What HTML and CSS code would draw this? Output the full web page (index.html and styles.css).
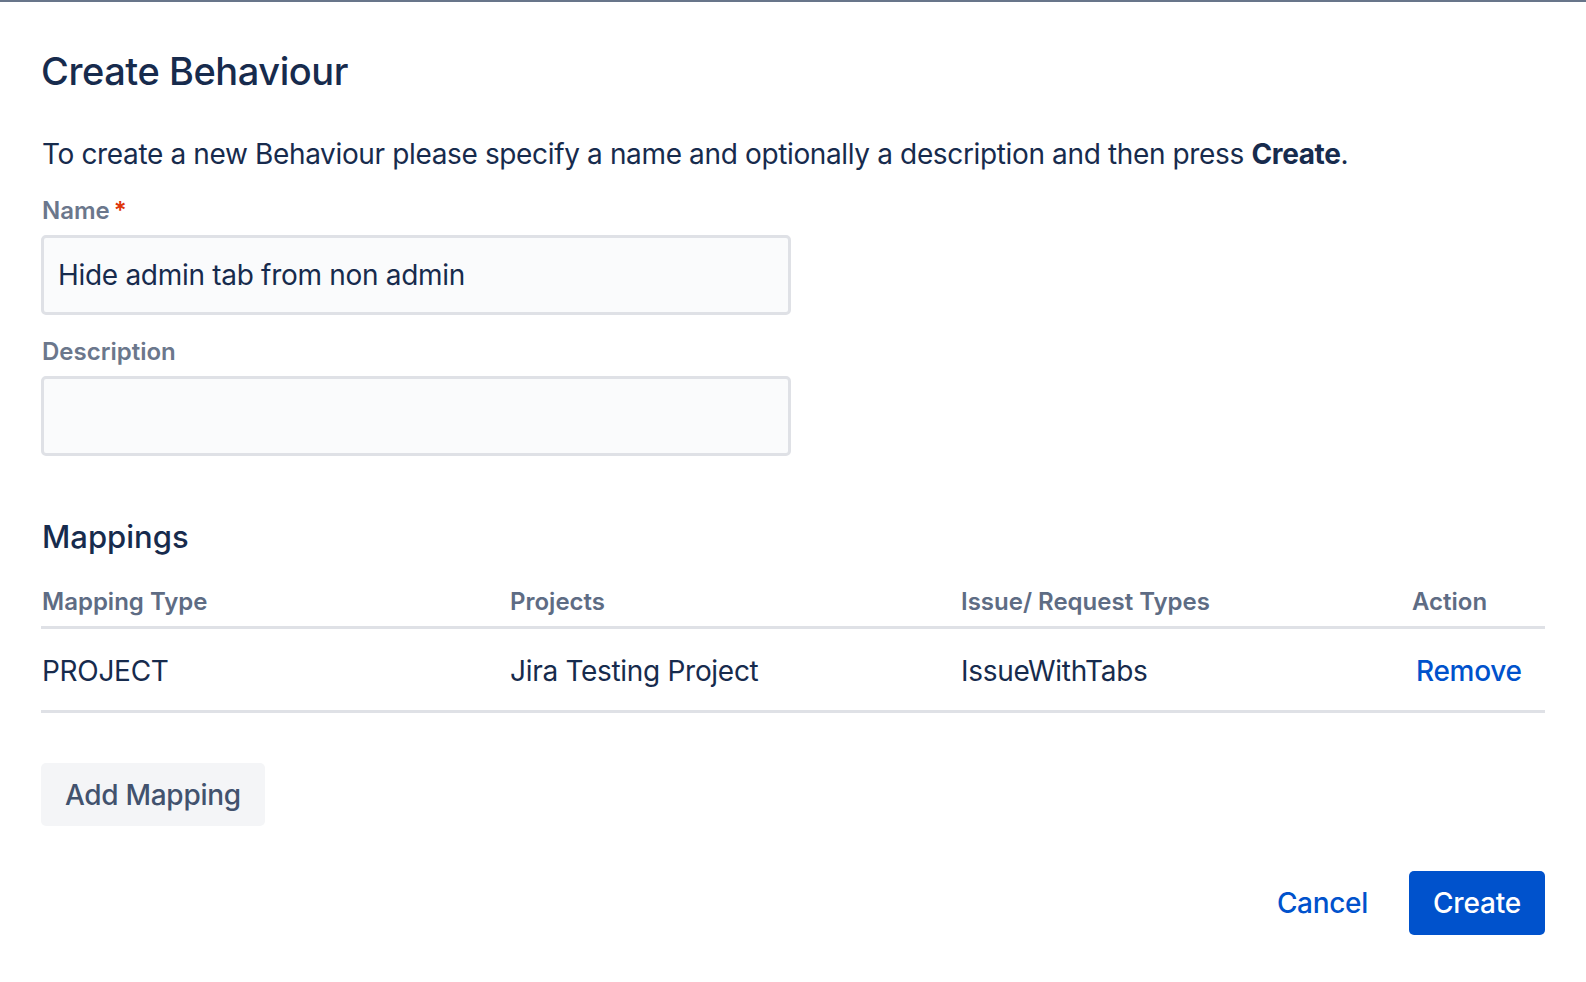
FILE: index.html
```html
<!DOCTYPE html>
<html lang="en">
<head>
<meta charset="utf-8">
<title>Create Behaviour</title>
<link rel="stylesheet" href="styles.css">
</head>
<body>
<div class="topbar"></div>
<main class="dialog">
  <h1 class="title">Create Behaviour</h1>
  <p class="intro">To create a new Behaviour please specify a name and optionally a description and then press <strong>Create</strong>.</p>

  <div class="field">
    <label class="label" for="name">Name<span class="req">*</span></label>
    <div class="input">Hide admin tab from non admin</div>
  </div>

  <div class="field">
    <label class="label" for="desc">Description</label>
    <div class="input"></div>
  </div>

  <h2 class="subtitle">Mappings</h2>

  <div class="table">
    <div class="row head">
      <div class="cell">Mapping Type</div>
      <div class="cell">Projects</div>
      <div class="cell">Issue/ Request Types</div>
      <div class="cell">Action</div>
    </div>
    <div class="row body">
      <div class="cell">PROJECT</div>
      <div class="cell">Jira Testing Project</div>
      <div class="cell">IssueWithTabs</div>
      <div class="cell"><a class="link" href="#">Remove</a></div>
    </div>
  </div>

  <button class="btn-subtle">Add Mapping</button>

  <div class="footer">
    <a class="link cancel" href="#">Cancel</a>
    <button class="btn-primary">Create</button>
  </div>
</main>
</body>
</html>
```
FILE: styles.css
```css
html, body {
  margin: 0;
  padding: 0;
  background: #ffffff;
}
body {
  font-family: Inter, "Noto Sans", "Liberation Sans", sans-serif;
  color: #172b4d;
}
.topbar {
  height: 2px;
  background: #68758a;
}
.dialog {
  padding: 49px 0 0 41px;
  display: flex;
  flex-direction: column;
  align-items: flex-start;
}
.title {
  margin: 0;
  font-size: 38px;
  line-height: 40px;
  font-weight: 500;
  letter-spacing: -0.45px;
  color: #172b4d;
}
.intro {
  margin: 43px 0 0 1px;
  font-size: 28px;
  line-height: 40px;
  font-weight: 400;
  letter-spacing: -0.36px;
}
.intro strong {
  font-weight: 700;
}
.field {
  margin-top: 21px;
  display: flex;
  flex-direction: column;
  gap: 8px;
}
.label {
  margin-left: 1px;
  font-size: 24px;
  line-height: 32px;
  font-weight: 600;
  color: #6b778c;
}
.req {
  color: #de350b;
  margin-left: 4px;
}
.input {
  box-sizing: border-box;
  width: 750px;
  height: 80px;
  border: 3px solid #dfe1e6;
  border-radius: 5px;
  background: #fafbfc;
  padding: 0 14px;
  font-size: 28px;
  line-height: 74px;
  letter-spacing: -0.3px;
  color: #172b4d;
}
.subtitle {
  margin: 61px 0 0 1px;
  font-size: 31px;
  line-height: 40px;
  font-weight: 500;
  color: #172b4d;
}
.table {
  margin-top: 25px;
  width: 1504px;
}
.row {
  display: grid;
  grid-template-columns: 468px 451px 451px 1fr;
}
.row.head {
  border-bottom: 3px solid #dfe1e6;
}
.row.head .cell {
  padding: 4px 0 8px 1px;
  font-size: 24px;
  line-height: 32px;
  font-weight: 600;
  color: #5e6c84;
}
.row.body {
  border-bottom: 3px solid #dfe1e6;
}
.row.body .cell {
  padding: 24px 0 21px 1px;
  font-size: 28px;
  line-height: 36px;
  letter-spacing: -0.3px;
  color: #172b4d;
}
.link {
  color: #0052cc;
  text-decoration: none;
  font-weight: 500;
}
.row.body .link {
  margin-left: 4px;
}
.btn-subtle {
  margin-top: 50px;
  height: 63px;
  padding: 0 24px;
  border: none;
  border-radius: 5px;
  background: #f4f5f7;
  color: #42526e;
  font-family: inherit;
  font-size: 28px;
  font-weight: 500;
  letter-spacing: -0.3px;
}
.footer {
  margin-top: 45px;
  width: 1504px;
  display: flex;
  justify-content: flex-end;
  align-items: center;
  gap: 41px;
}
.cancel {
  font-size: 28px;
  letter-spacing: -0.3px;
}
.btn-primary {
  height: 64px;
  padding: 0 24px;
  border: none;
  border-radius: 5px;
  background: #0052cc;
  color: #ffffff;
  font-family: inherit;
  font-size: 28px;
  font-weight: 500;
  letter-spacing: -0.2px;
}
```
